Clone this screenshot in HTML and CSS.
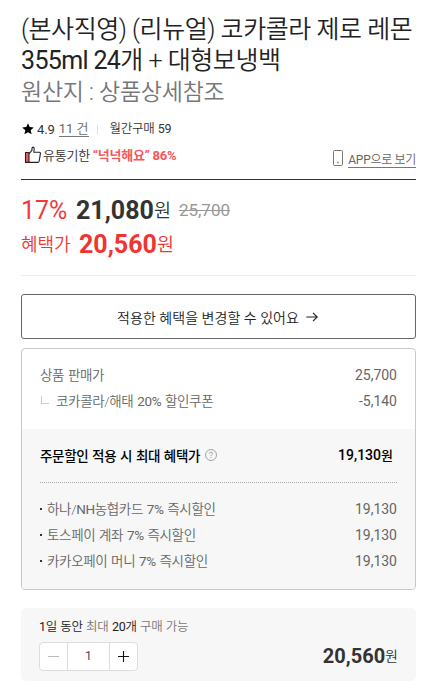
FILE: index.html
```html
<!DOCTYPE html>
<html lang="ko">
<head>
<meta charset="utf-8">
<title>코카콜라 제로 레몬</title>
<link rel="stylesheet" href="styles.css">
</head>
<body>
<main class="product">
  <h1 class="title">(본사직영) (리뉴얼) 코카콜라 제로 레몬<br><span class="digits">355ml 24</span>개 + 대형보냉백<br><span class="origin">원산지 : 상품상세참조</span></h1>
  <div class="meta">
    <svg class="star" viewBox="0 0 12 12"><path d="M6 0.3 7.7 4.1 11.8 4.5 8.7 7.2 9.6 11.3 6 9.2 2.4 11.3 3.3 7.2 0.2 4.5 4.3 4.1Z"/></svg>
    <span class="score">4.9</span>
    <a class="reviews"><span class="latin">11</span> 건</a>
    <i class="bar"></i>
    <span class="monthly">월간구매 <span class="latin">59</span></span>
  </div>
  <div class="expiry">
    <svg class="thumb" viewBox="0 0 18 18"><path d="M1.5 6.5H5V16.5H1.5Z" fill="#f5575b"/><path d="M5 8 8 4.2V2.2Q8.2 1 9.2 1.1 10.4 1.4 10.2 3.2L9.8 6.2H15.3Q16.6 6.3 16.4 7.7L15.2 15Q14.9 16.4 13.7 16.4H1.5V6.5H5V16.4" fill="none" stroke="#222" stroke-width="1.1" stroke-linejoin="round"/></svg>
    <span class="expiry-text">유통기한 <b>“넉넉해요” 86%</b></span>
    <span class="app"><svg class="phone" viewBox="0 0 10 16"><rect x=".5" y=".5" width="9" height="15" rx="1.2" fill="none" stroke="#777"/><circle cx="5" cy="12.5" r="1" fill="#999"/></svg><a><span class="latin">APP</span>으로 보기</a></span>
  </div>
  <section class="prices">
    <div class="price-row"><span class="rate">17%</span><strong>21,080</strong><span class="won">원</span><del>25,700</del></div>
    <div class="price-row benefit"><span class="label">혜택가</span><strong>20,560</strong><span class="won">원</span></div>
  </section>
  <button class="change">적용한 혜택을 변경할 수 있어요<svg viewBox="0 0 12 10"><path d="M.3 5H11M7 .8 11.2 5 7 9.2" fill="none" stroke="#222" stroke-width="1.2"/></svg></button>
  <section class="card">
    <div class="base">
      <div class="row"><span class="name">상품 판매가</span><span class="num">25,700</span></div>
      <div class="row"><span class="name sub">코카콜라/해태 <span class="latin">20%</span> 할인쿠폰</span><span class="num">-5,140</span></div>
    </div>
    <div class="max">
      <div class="total"><span class="total-name">주문할인 적용 시 최대 혜택가</span><svg class="help" viewBox="0 0 12 12"><circle cx="6" cy="6" r="5.5" fill="none" stroke="#999" stroke-width=".9"/><path d="M4.3 4.7Q4.4 3.2 6 3.2 7.6 3.3 7.6 4.6 7.5 5.4 6.6 5.9 6 6.3 6 7.2M6 8.1V9.1" fill="none" stroke="#999" stroke-width=".9"/></svg><span class="total-value">19,130<small>원</small></span></div>
      <ul>
        <li class="row"><span class="name way">하나/<span class="latin">NH</span>농협카드 <span class="latin">7%</span> 즉시할인</span><span class="num">19,130</span></li>
        <li class="row"><span class="name way">토스페이 계좌 <span class="latin">7%</span> 즉시할인</span><span class="num">19,130</span></li>
        <li class="row"><span class="name way">카카오페이 머니 <span class="latin">7%</span> 즉시할인</span><span class="num">19,130</span></li>
      </ul>
    </div>
  </section>
  <section class="order">
    <p class="limit"><b><span class="latin">1</span>일 동안</b> 최대 <b><span class="latin">20</span>개</b> 구매 가능</p>
    <div class="order-row">
      <div class="stepper">
        <span class="minus"><svg viewBox="0 0 11 11"><path d="M0 5.5H11" stroke="#bbb"/></svg></span>
        <span class="qty">1</span>
        <span class="plus"><svg viewBox="0 0 11 11"><path d="M0 5.5H11M5.5 0V11" stroke="#111" stroke-width="1.1"/></svg></span>
      </div>
      <div class="sum"><strong>20,560</strong><span>원</span></div>
    </div>
  </section>
</main>
</body>
</html>
```
FILE: styles.css
```css
* { box-sizing: border-box; margin: 0; padding: 0; }
body { background: #fff; color: #333; font-family: Roboto, "Noto Sans CJK KR", sans-serif; font-size: 14px; font-weight: 350; }
svg { display: block; flex: none; }
.latin { font-weight: 400; }
.product { width: 395px; margin: 0 0 0 21px; padding-top: 14px; }
.title { height: 93px; font-size: 25px; line-height: 31px; font-weight: 350; letter-spacing: -.45px; color: #222; white-space: nowrap; }
.digits { font-weight: 400; letter-spacing: -.65px; }
.origin { color: #777; font-size: 23px; letter-spacing: -.25px; }
.meta { display: flex; align-items: center; height: 20px; margin-top: 12px; font-size: 13px; white-space: nowrap; }
.star { width: 12px; height: 12px; margin-left: 1px; }
.score { margin-left: 3px; font-weight: 400; letter-spacing: -.1px; }
.reviews { margin: 1px 0 0 4px; color: #666; border-bottom: 1px solid #777; line-height: 14px; }
.bar { width: 1px; height: 9px; margin: 0 12px 0 8px; background: #ddd; }
.monthly { margin-top: -3px; font-size: 12.5px; letter-spacing: -.25px; word-spacing: .5px; }
.expiry { display: flex; align-items: center; height: 41px; padding-bottom: 8px; border-bottom: 1px solid #333; font-size: 13px; white-space: nowrap; }
.thumb { width: 18px; height: 18px; margin-left: 3px; }
.expiry-text { margin: -2px 0 0 1px; letter-spacing: -.25px; }
.expiry-text b { color: #f5575b; font-weight: 700; }
.app { display: flex; align-items: center; gap: 5px; margin: 6px 0 0 auto; color: #666; font-size: 12px; letter-spacing: -.3px; }
.phone { width: 10px; height: 16px; }
.app a { margin-top: 4px; border-bottom: 1px solid #777; line-height: 14px; }
.prices { height: 96px; padding-top: 14px; border-bottom: 1px solid #eee; }
.price-row { display: flex; align-items: baseline; height: 34px; line-height: 34px; white-space: nowrap; }
.price-row strong { font-size: 25px; font-weight: 700; }
.rate { width: 55px; font-size: 25px; font-weight: 400; color: #f03a3a; }
.won { font-size: 18.5px; transform: translateY(-2px); }
del { margin-left: 8px; font-size: 17px; font-weight: 400; color: #999; transform: translateY(-3px); }
.benefit, .benefit .label { color: #f0342f; }
.benefit .label { width: 58px; font-size: 18px; transform: translateY(-2px); }
.change { display: flex; align-items: center; justify-content: center; gap: 7px; width: 100%; height: 45px; margin-top: 18px; padding: 0 2px 0 0; border: 1px solid #666; border-radius: 3px; background: #fff; color: #222; font: 350 14px Roboto, "Noto Sans CJK KR", sans-serif; letter-spacing: .05px; }
.change svg { width: 12px; height: 10px; }
.card { height: 242px; margin-top: 9px; border: 1px solid #c8c8c8; border-radius: 4px; overflow: hidden; }
.base { height: 80px; padding: 13px 18px 0; }
.row { display: flex; align-items: center; justify-content: space-between; height: 26px; color: #666; white-space: nowrap; }
.name { margin-top: -2px; font-size: 13.5px; letter-spacing: -.35px; word-spacing: .8px; }
.num { font-size: 14px; font-weight: 400; }
.sub::before { content: ""; display: inline-block; width: 7px; height: 7px; margin: 0 7px 2px 1px; border: solid #ccc; border-width: 0 0 1px 1px; }
.max { height: 160px; padding: 0 18px; background: #f7f7f7; }
.total { display: flex; align-items: center; height: 54px; padding-bottom: 2px; border-bottom: 1px dotted #aaa; color: #000; font-weight: 500; white-space: nowrap; }
.total-name { font-size: 13.5px; letter-spacing: -.35px; word-spacing: .8px; }
.help { width: 12px; height: 12px; margin-left: 5px; }
.total-value { margin: -1px 4px 0 auto; }
.total-value small { font-size: 13px; }
ul { padding-top: 13px; list-style: none; }
.way::before { content: ""; display: inline-block; width: 2px; height: 2px; margin: 0 5px 4px 0; background: #333; }
.order { height: 73px; margin-top: 18px; padding: 9px 18px 0; border-radius: 5px; background: #f7f7f7; }
.limit { height: 20px; line-height: 20px; font-size: 12.5px; letter-spacing: -.25px; word-spacing: .5px; color: #777; }
.limit b { color: #222; font-weight: 350; }
.order-row { display: flex; justify-content: space-between; margin-top: 5px; }
.stepper { display: flex; width: 99px; height: 29px; border: 1px solid #ddd; border-radius: 4px; background: #fff; }
.stepper span { display: flex; align-items: center; justify-content: center; width: 28px; }
.stepper .qty { width: 43px; padding-bottom: 2px; border: solid #ddd; border-width: 0 1px; color: #555; font-size: 13px; font-weight: 400; }
.stepper svg { width: 11px; height: 11px; }
.sum { display: flex; align-items: baseline; line-height: 29px; white-space: nowrap; }
.sum strong { font-size: 20px; font-weight: 700; }
.sum span { font-size: 14px; transform: translateY(-2px); }
```
